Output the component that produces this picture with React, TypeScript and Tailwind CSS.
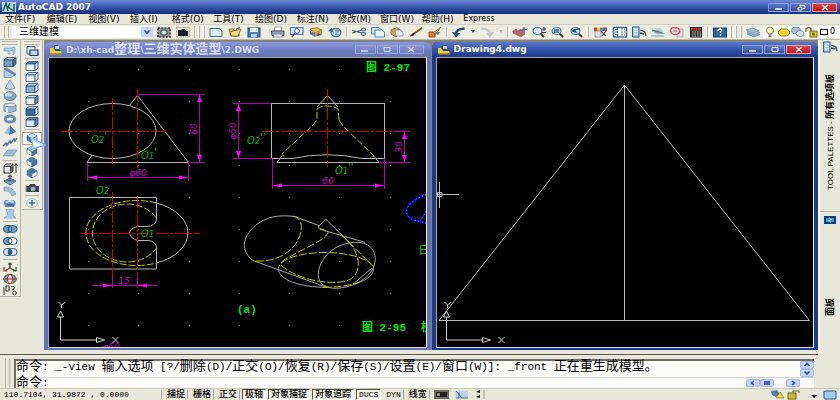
import React from "react";

const UI = "font-['DejaVu_Sans','Noto_Sans_CJK_SC',sans-serif]";
const MONO = "font-['Liberation_Mono','Noto_Sans_CJK_SC',monospace]";

/* Latin text with the Chinese runs set in a full-width 13px size. */
function Mixed({ text }: { text: string }) {
  const parts = text.split(/([\u3000-\u9fff]+)/);
  return (
    <>
      {parts.map((p, i) =>
        i % 2 ? (
          <span key={i} className="text-[13px]">{p}</span>
        ) : (
          <span key={i}>{p}</span>
        ),
      )}
    </>
  );
}

const B = "#5b86b4";
const D = "#1f4878";
const L = "#cfe2f2";

const cube = (top: string, front: string, side: string) => (
  <g stroke={D} strokeWidth=".8">
    <path d="M2 4L5 1.5H14L11 4Z" fill={top} />
    <path d="M2 4H11V10.5H2Z" fill={front} />
    <path d="M11 4L14 1.5V8L11 10.5Z" fill={side} />
  </g>
);
const iso = (a: string, b: string, c: string) => (
  <g stroke="#42678e" strokeWidth=".6">
    <path d="M3 4L8 1L13 4L8 7Z" fill={a} />
    <path d="M3 4L8 7V11L3 8Z" fill={b} />
    <path d="M13 4L8 7V11L13 8Z" fill={c} />
  </g>
);
const lens = (extra: React.ReactNode) => (
  <g>
    <path d="M9 7L13 11" stroke="#4a3a28" strokeWidth="2" />
    <ellipse cx="6.5" cy="5" rx="4.5" ry="3.5" fill="#d4e8f4" stroke="#56718c" strokeWidth="1.2" />
    {extra}
  </g>
);
const rings = (a: string, m: string, b: string) => (
  <g stroke="#24567c" strokeWidth=".9">
    <rect x="1.5" y="2.5" width="9" height="7" rx="3.5" fill={a} />
    <rect x="6" y="2.5" width="9" height="7" rx="3.5" fill={b} />
    <ellipse cx="8.2" cy="6" rx="1.8" ry="2.6" fill={m} />
  </g>
);

const ICONS: Record<string, React.ReactNode> = {
  gear: (
    <g>
      <rect x="2" y="2" width="12" height="9" fill="#9a9c98" stroke="#333" strokeWidth="1.6" strokeDasharray="2 1.3" />
      <ellipse cx="8" cy="6.5" rx="3.4" ry="2.6" fill="#e8e0b8" stroke="#38608a" strokeWidth="1.4" />
    </g>
  ),
  wsave: (
    <g>
      <rect x="1.5" y="1.5" width="13" height="9.5" fill="none" stroke="#8f8a55" strokeDasharray="1 1" />
      <path d="M3 10V4H6L7 3H10L11 5H13V10Z" fill="#1b1d22" />
    </g>
  ),
  new: <path d="M2 2.5H11L14 5V10.5H2Z" fill="#dff0f8" stroke="#3d6c94" strokeWidth="1" />,
  open: (
    <g>
      <path d="M2 3H6L7 4.5H12V10H4Z" fill="#e2bb4a" stroke="#6c5b22" strokeWidth=".8" />
      <path d="M3 6L14 3L11 10H4Z" fill="#f4dc7d" stroke="#6c5b22" strokeWidth=".8" />
      <path d="M9 3L13 1.5" stroke="#333" />
    </g>
  ),
  save: (
    <g>
      <rect x="2" y="2" width="12" height="9" fill="#477eb8" stroke="#224a7c" />
      <rect x="4" y="2" width="8" height="4" fill="#e6f0f8" />
      <rect x="5" y="8" width="6" height="3" fill="#bed0e2" />
    </g>
  ),
  plot: (
    <g>
      <path d="M5 1H12L11 5H4Z" fill="#fff" stroke="#779" strokeWidth=".7" />
      <path d="M1.500 5H14V9.500H2Z" fill="#9aa0b4" stroke="#4d526c" />
      <path d="M4 8H12V11H3Z" fill="#dfe6ee" stroke="#667" strokeWidth=".6" />
    </g>
  ),
  preview: (
    <g>
      <path d="M1.500 1.500H14V8.500H1.500Z" fill="#cfe4f2" stroke="#4d7fa8" strokeWidth="1.2" />
      <circle cx="8" cy="5" r="2.4" fill="#eaf6ff" stroke="#456" />
      <path d="M6 7L3 11" stroke="#345" strokeWidth="1.6" />
    </g>
  ),
  publish: (
    <g>
      <path d="M2 3L9 1.500L14 4L7 7Z" fill="#eabf3e" stroke="#6b5518" strokeWidth=".7" />
      <path d="M2 5L7 7V11L2 8Z" fill="#5c7a9c" />
      <path d="M7 7L14 4V8L7 11Z" fill="#d1953a" />
      <path d="M10 7L14 9L9 10Z" fill="#2b568a" />
    </g>
  ),
  globe: (
    <g>
      <ellipse cx="9" cy="6.500" rx="5" ry="4.300" fill="#7db7d6" stroke="#38709c" />
      <path d="M7 4Q9 6 7 9M10 3L13 6L10 8" stroke="#d8eef6" fill="none" />
      <path d="M1 5L5 2L6 6Z" fill="#2e5f8c" />
      <circle cx="11" cy="4" r="1.500" fill="#da7a5a" />
    </g>
  ),
  cut: (
    <g stroke="#435a74" strokeWidth="1.200" fill="none">
      <path d="M1 4.500L11 7M1 7L11 4" />
      <ellipse cx="12.500" cy="3.500" rx="2" ry="1.500" />
      <ellipse cx="12.500" cy="8" rx="2" ry="1.500" />
    </g>
  ),
  copy: (
    <g stroke="#4d80ac" strokeWidth=".9">
      <path d="M1.500 1.500H9L11 3.500V8H1.500Z" fill="#c3dff0" />
      <path d="M5 4H12L14.500 6V11H5Z" fill="#e6f4fb" />
    </g>
  ),
  paste: (
    <g>
      <path d="M2 4L8 1.500L13 6L7 11L2 8Z" fill="#c9a650" stroke="#6e5d30" strokeWidth=".8" />
      <path d="M6 4H12L14 7V10H7Z" fill="#dceaf4" stroke="#628" strokeWidth=".4" />
    </g>
  ),
  brush: (
    <g>
      <path d="M14 2L7 7" stroke="#8c5527" strokeWidth="1.800" />
      <path d="M8 6L5 10L1.500 10.500L5 7Z" fill="#202020" />
    </g>
  ),
  match: (
    <g>
      <path d="M2 6H8V11H2Z" fill="#e98127" stroke="#8a2f12" strokeWidth=".8" />
      <path d="M14 1L6 7L9 8Z" fill="#f7c74a" stroke="#7c4d16" strokeWidth=".7" />
      <path d="M8 6L11 9L13 6" fill="#477cb2" />
    </g>
  ),
  undo: (
    <g>
      <path d="M5 8Q5 3 13.500 2.500" stroke="#1d4b80" strokeWidth="2.400" fill="none" />
      <path d="M1 6L9 7L5 11.500Z" fill="#1d4b80" />
    </g>
  ),
  redo: (
    <g>
      <path d="M11 8Q11 3 2.500 2.500" stroke="#c0c4c4" strokeWidth="2.200" fill="none" />
      <path d="M15 6L7 7L11 11.500Z" fill="#c0c4c4" />
    </g>
  ),
  pan: (
    <g>
      <path d="M1 5L4 3L6 5L9 3L12 6L13 8L9 11L5 9L1 7Z" fill="#b4646a" stroke="#9c5058" strokeWidth=".6" />
      <path d="M12 1V6M9.500 3.500H15" stroke="#3b5c80" strokeWidth="1.200" />
    </g>
  ),
  zoomrt: lens(<path d="M13 1V5M11 3H15M11 6.500H15" stroke="#333" />),
  zoomwin: lens(<rect x="4" y="3" width="5" height="4" fill="#4b87b8" />),
  zoomprev: lens(<path d="M4 5Q6 2 11 3M3 5L7 6L5 3" stroke="#1c4d84" fill="#1c4d84" strokeWidth="1.200" />),
  props: (
    <g>
      <path d="M1 1.500H4V5H1Z" fill="#e03838" />
      <path d="M4 1.500H7V5H4Z" fill="#f1ca34" />
      <path d="M7 1.500H10V5H7Z" fill="#36a25a" />
      <path d="M10 1.500H14V5H10Z" fill="#8c49b6" />
      <path d="M2 5H8V11H2Z" fill="#e6dcf0" stroke="#847a92" strokeWidth=".7" />
      <path d="M8 5L13 10M13 5L9 10" stroke="#574a5c" strokeWidth="1.200" />
    </g>
  ),
  dcenter: (
    <g>
      <rect x="1.500" y="1.500" width="13" height="9.500" fill="#fff" stroke="#33659c" strokeWidth="1.300" />
      <path d="M5.500 2V11M9 3H13M9 6H13M9 9H13" stroke="#4077b0" strokeDasharray="2 1" />
      <path d="M3 3.500H5M3 6H5M3 8.500H5" stroke="#4077b0" />
    </g>
  ),
  palette: (
    <g>
      <path d="M1.500 1H8V11H1.500Z" fill="#a9c8e4" stroke="#315e90" />
      <path d="M3 3H7M3 5.500H7M3 8H7" stroke="#fff" />
      <path d="M9 4L14 6L15 10M9 7L13 8" stroke="#33455c" strokeWidth="1.300" fill="none" />
    </g>
  ),
  sheets: (
    <g>
      <path d="M1 2H10L14 6H5Z" fill="#bcd6e4" />
      <path d="M1 5L8 4L15 8H7Z" fill="#86a9b8" />
      <path d="M1 9H14V11H1Z" fill="#a8c6d6" />
      <path d="M2 4L12 7" stroke="#5c7e54" />
    </g>
  ),
  markup: (
    <g>
      <rect x="8" y="3" width="6" height="8" fill="#ddd" stroke="#999" strokeWidth=".7" />
      <path d="M2 3Q3 1 6 2Q10 1 10 4Q12 6 9 8Q6 9 4 8Q1 7 2 3Z" fill="#fbe3e6" stroke="#df4152" strokeWidth="1.300" />
      <path d="M4 5H8" stroke="#df4152" />
    </g>
  ),
  calc: (
    <g>
      <rect x="2" y="1" width="12" height="10.500" fill="#2b2422" />
      <rect x="3" y="2" width="10" height="2.500" fill="#a33c30" />
      <path d="M4 6H13M4 8H13M4 10H13" stroke="#d6d6cc" strokeDasharray="1.500 1" />
    </g>
  ),
  help: (
    <g>
      <rect x="1.500" y="2" width="13" height="9" fill="#2c649c" stroke="#16406e" />
      <path d="M6 5Q6 3 8.500 3Q11 4 8.500 6V7M8.500 8.500V9.700" stroke="#fff" strokeWidth="1.300" fill="none" />
    </g>
  ),
  layers: (
    <g stroke="#6b8cac" strokeWidth=".7">
      <path d="M2 8L8 6L15 8.500L9 11Z" fill="#8ea6bc" />
      <path d="M2 6L8 4L15 6.500L9 9Z" fill="#b2c6d8" />
      <path d="M1 4L7 2L14 4.500L8 7Z" fill="#a7bfd2" />
    </g>
  ),
  bulb: (
    <g>
      <ellipse cx="8" cy="4.500" rx="3.600" ry="3.500" fill="#fbf6bd" stroke="#a08c2c" />
      <path d="M6.500 8H9.500V11H6.500Z" fill="#8e8c70" />
    </g>
  ),
  sun: <path d="M5 3H11L13.500 5V8L11 10H5L2.500 8V5Z" fill="#ecd42c" stroke="#9c8716" />,
  frozen: (
    <g stroke="#55779a" strokeWidth=".7">
      <ellipse cx="6" cy="4.500" rx="4.500" ry="3.500" fill="#a4bfd2" />
      <ellipse cx="10" cy="7.500" rx="4" ry="3" fill="#d1e0ea" />
    </g>
  ),
  lock: (
    <g>
      <path d="M2 6V3Q5 0 7 3V6" fill="none" stroke="#7c751c" strokeWidth="1.500" />
      <rect x="6" y="5" width="7" height="6" fill="#dccb2c" stroke="#6c6416" />
      <circle cx="9.500" cy="8" r="1.500" fill="#6c6416" />
    </g>
  ),
  polysolid: <path d="M2 3H9L13 2V8L11 10V5L8 6V9H6V6L2 6Z" fill="#a7cbea" stroke="#76a0c8" strokeWidth=".6" />,
  box: cube("#cfe0f0", "#7e9cc0", "#456a98"),
  wedge: (
    <g stroke="#5f7fa0" strokeWidth=".7">
      <path d="M2 2L13 8L9 10.500H2Z" fill="#b4cbe0" />
      <path d="M2 2L5 1L14 7L13 8Z" fill="#5f88b4" />
    </g>
  ),
  cone: <path d="M8 1L13 9Q8 12 3 9Z" fill="#c5d6e6" stroke="#6e8cac" strokeWidth=".8" />,
  sphere: (
    <g>
      <ellipse cx="8" cy="6" rx="6" ry="4.500" fill="#86a3c4" stroke="#57789c" strokeWidth=".8" />
      <ellipse cx="6.500" cy="4.500" rx="3.500" ry="2" fill="#c9dced" />
    </g>
  ),
  cylinder: (
    <g stroke="#6785a8" strokeWidth=".8">
      <path d="M2 3V9Q8 12 14 9V3Z" fill="#9cb8d4" />
      <ellipse cx="8" cy="3" rx="6" ry="1.700" fill="#dce8f2" />
      <path d="M5 5V10" stroke="#dfeaf4" strokeWidth="2" />
    </g>
  ),
  torus: <ellipse cx="8" cy="6" rx="4.700" ry="3" fill="#e4ebee" stroke="#6b8fb6" strokeWidth="3" />,
  pyramid: (
    <g>
      <path d="M8 1L2 9L7 11Z" fill="#9dc4e6" />
      <path d="M8 1L7 11L14 8Z" fill="#4878a8" />
    </g>
  ),
  helix: <path d="M1 10L4 7L5 9L8 5L9 7L12 3L13 5L15 2" stroke="#4b7098" strokeWidth="1.500" fill="none" />,
  planar: <path d="M1 9L6 3H15L11 9Z" fill="#9fbbd6" stroke="#7698b8" strokeWidth=".7" />,
  extrude: (
    <g stroke="#222" strokeWidth=".9">
      <path d="M2 4H9V11H2Z" fill="#e8e8e0" />
      <path d="M2 4L4 2H11L9 4Z" fill="#fff" />
      <path d="M9 4L11 2V9L9 11Z" fill="#888" />
      <path d="M14 11V2M12.500 4L14 1.500L15.500 4" fill="none" />
    </g>
  ),
  presspull: (
    <g>
      <path d="M2 7L8 4L14 7L8 11Z" fill="#87abc9" stroke="#2c4b6a" strokeWidth=".8" />
      <path d="M8 7V1M6 3L8 1L10 3M4 7H12" stroke="#2c4b6a" strokeWidth="1.100" fill="none" />
    </g>
  ),
  sweep: <path d="M2 2Q10 1 14 9L10 11Q8 5 2 6Z" fill="#9ec0e0" stroke="#6f93b8" strokeWidth=".7" />,
  revolve: (
    <g>
      <path d="M3 3H12L14 6L12 10H3L2 6Z" fill="#5b92c8" />
      <path d="M3 5Q8 1 13 5L10 6Q8 4 5 6Z" fill="#c1daf0" />
      <path d="M5 8H12" stroke="#1c466e" />
    </g>
  ),
  loft: <path d="M4 1.500H12L11 7L14 10H2L6 7Z" fill="#a9c8e8" stroke="#7ba3cc" strokeWidth=".7" />,
  union: rings("#6c9bbf", "#6c9bbf", "#6c9bbf"),
  subtract: rings("#6c9bbf", "#eef2f0", "#eef2f0"),
  intersect: rings("#d6e2ea", "#24567c", "#d6e2ea"),
  move3d: (
    <g fill="none" strokeWidth="1.200">
      <path d="M8 7V1.500M6 3H10" stroke="#222" />
      <path d="M8 7L2 10M2 6V10H5" stroke="#a33" />
      <path d="M8 7L14 10M14 6V10H11" stroke="#2b6a3a" />
    </g>
  ),
  rotate3d: (
    <g fill="none" strokeWidth="1.200">
      <ellipse cx="8" cy="6" rx="6" ry="4.500" stroke="#3c8a4a" />
      <ellipse cx="8" cy="6" rx="2.500" ry="4.500" stroke="#b8323a" />
      <path d="M1 6H15" stroke="#b8323a" />
      <path d="M4 3V9M12 3V9" stroke="#2c5a9c" />
    </g>
  ),
  align3d: (
    <g fill="none" stroke="#333">
      <path d="M2 3V11M4 2H7V7H4Z" />
      <path d="M9 3Q13 1 12 5L10 6" />
      <circle cx="12.500" cy="9" r="1.800" />
    </g>
  ),
  views: (
    <g>
      <path d="M3 1.500H11V9H3Z" fill="#e4edf2" stroke="#44658a" />
      <path d="M6 5H14V10.500H6Z" fill="#bcd4e6" stroke="#1e3c5c" strokeWidth="1.200" />
    </g>
  ),
  vtop: cube(B, "#f1f5f7", L),
  vbottom: cube(L, "#e4eef4", "#f1f5f7"),
  vleft: cube(L, "#86acce", "#f1f5f7"),
  vright: cube(L, "#f1f5f7", B),
  vfront: cube(L, "#3c6a9a", L),
  vback: cube(B, "#dbe8f0", B),
  sw: iso("#d9e8f2", "#3d73a8", L),
  se: iso(L, "#e6f0f6", "#3d73a8"),
  ne: iso("#4c80b0", "#e6f0f6", "#3d73a8"),
  nw: iso("#3d73a8", "#4c80b0", "#e6f0f6"),
  camera: (
    <g>
      <path d="M2 4H5L6 2H11L12 4H15V10H2Z" fill="#39444e" />
      <ellipse cx="9" cy="7" rx="2.500" ry="2.200" fill="#9fb2c0" />
      <path d="M2 3V10" stroke="#8a98a2" />
    </g>
  ),
  eye: (
    <g>
      <ellipse cx="8" cy="6" rx="5.500" ry="4.300" fill="#eef3f4" stroke="#9cb4c8" />
      <path d="M8 3V9M5 6H11" stroke="#34689a" strokeWidth="1.400" />
    </g>
  ),
};

function Icon({ name }: { name: string }) {
  return (
    <svg viewBox="0 0 16 12" className="h-3 w-4 shrink-0" aria-hidden="true">
      {ICONS[name]}
    </svg>
  );
}

function ToolButton({ name }: { name: string }) {
  return (
    <button aria-label={name} className="flex w-[19px] shrink-0 items-center justify-center">
      <Icon name={name} />
    </button>
  );
}

function Sep() {
  return (
    <div className="flex w-[5px] shrink-0 justify-center py-[2px]">
      <div className="w-px bg-[#c4c4b4]" />
    </div>
  );
}

function Grip() {
  return (
    <div className="flex w-[14px] shrink-0 justify-center gap-[3px] py-[1px]">
      <div className="w-px bg-[#b8b8a8]" />
      <div className="w-[2px] border-r border-[#b8b8a8] bg-white" />
      <div className="w-[2px] border-r border-[#b8b8a8] bg-white" />
    </div>
  );
}

function DropMark({ dim }: { dim?: boolean }) {
  return (
    <button aria-label="history" className="flex w-[9px] shrink-0 items-center justify-center">
      <svg viewBox="0 0 6 4" className="h-1 w-1.5">
        <path d="M1 0H5L3 3Z" fill={dim ? "#b4b8b8" : "#1d4b80"} />
      </svg>
    </button>
  );
}

function Tools({ names }: { names: string[] }) {
  return (
    <>
      {names.map((n) => (
        <ToolButton key={n} name={n} />
      ))}
    </>
  );
}

function WindowButtons({ active, restore }: { active: boolean; restore?: boolean }) {
  const base = active
    ? "border-[#8ea2e0] bg-linear-to-b from-[#5c78c8] to-[#3450a0]"
    : "border-[#98a4dc] bg-linear-to-b from-[#8894d0] to-[#6e7cc0]";
  const close = active ? "border-[#e8a0a0] bg-linear-to-b from-[#e04040] to-[#b81818]" : base;
  const stroke = active ? "#ffffff" : "#d4daf4";
  return (
    <div className="flex h-[9px] gap-px">
      <button aria-label="minimize" className={`flex w-[21px] items-center justify-center border ${base}`}>
        <svg viewBox="0 0 10 7" className="h-[7px] w-2.5">
          <path d="M1 5H8" stroke={stroke} strokeWidth="1.500" />
        </svg>
      </button>
      <button aria-label="maximize" className={`flex w-[21px] items-center justify-center border ${base}`}>
        <svg viewBox="0 0 10 7" className="h-[7px] w-2.5" fill="none" stroke={stroke}>
          {restore ? <path d="M4 2.500V1.500H9V4.500H7M2 3.500H6V6H2Z" /> : <path d="M2 1.500H8V5.500H2Z" />}
        </svg>
      </button>
      <button aria-label="close" className={`flex w-[25px] items-center justify-center border ${close}`}>
        <svg viewBox="0 0 10 7" className="h-[7px] w-2.5">
          <path d="M2 1L8 6M8 1L2 6" stroke={stroke} strokeWidth="1.400" />
        </svg>
      </button>
    </div>
  );
}

function DocWindow({ title, active, children }: { title: string; active: boolean; children: React.ReactNode }) {
  return (
    <section
      className={`flex min-w-0 flex-1 flex-col rounded-t-md border-x-[4px] border-b-[2px] ${
        active ? "border-[#1c3a8c] bg-[#1c3a8c]" : "border-[#6472b0] bg-[#6472b0]"
      }`}
    >
      <header
        className={`-mx-[4px] flex h-[15px] shrink-0 items-center gap-[4px] rounded-t-md pr-[7px] pl-[6px] ${
          active ? "bg-linear-to-b from-[#5a78cc] via-[#3454a8] to-[#1c3a8c]" : "bg-linear-to-b from-[#8c98dc] via-[#7080c4] to-[#6472b0]"
        }`}
      >
        <svg viewBox="0 0 12 10" className="h-2.5 w-3 shrink-0">
          <path d="M4 0H8V3L11 6H5Z" fill="#2c5060" />
          <path d="M5 1H9V4H5Z" fill="#d4e4e0" />
          <path d="M0 3H3L5 6H11L12 9H0Z" fill="#f1cc38" />
          <path d="M0 8H12V9.500H0Z" fill="#b89020" />
        </svg>
        <h2
          className={`min-w-0 flex-1 text-[9px] leading-[15px] font-bold whitespace-pre ${
            active ? "text-white" : "text-[#d8def6]"
          }`}
        >
          <Mixed text={title} />
        </h2>
        <WindowButtons active={active} />
      </header>
      <div className="min-h-0 flex-1 border border-t-[#a8a8a0] border-r-[#f0f0f4] border-b-[#e0e0e4] border-l-[#a8a8a0] bg-black">
        {children}
      </div>
    </section>
  );
}

function Ucs({ x }: { x: number }) {
  return (
    <g stroke="#d4d4d4" fill="none">
      <path d={`M${x} 317V340H${x + 37}`} />
      <path d={`M${x - 3} 317L${x} 311L${x + 3} 317ZM${x + 36} 337.500L${x + 44} 340L${x + 36} 342.500Z`} />
      <path d={`M${x - 2} 302L${x + 1} 305L${x + 5} 302M${x + 1} 305V308M${x + 52} 337L${x + 58} 343M${x + 58} 337L${x + 52} 343`} />
    </g>
  );
}

/* Filled dimension arrowhead with its tip at x, y. */
function Tip({ x, y, dir }: { x: number; y: number; dir: "u" | "d" | "l" | "r" }) {
  const d = {
    u: `M${x} ${y}L${x - 2.5} ${y + 7}H${x + 2.5}Z`,
    d: `M${x} ${y}L${x - 2.5} ${y - 7}H${x + 2.5}Z`,
    l: `M${x} ${y}L${x + 9} ${y - 2}V${y + 2}Z`,
    r: `M${x} ${y}L${x - 9} ${y - 2}V${y + 2}Z`,
  }[dir];
  return <path d={d} fill="#ff00ff" stroke="none" />;
}

const DOT_X = [88, 138, 189, 239, 289, 339, 390];
const DOT_Y = [69, 101, 133, 165, 197, 229, 261, 293, 325];

function OrthographicDrawing() {
  return (
    <svg className="block h-full w-full" role="img" aria-label="2.DWG">
      <g transform="translate(-49 -58)" fill="none">
        {DOT_X.map((x) => DOT_Y.map((y) => <rect key={`${x}-${y}`} x={x} y={y} width="1" height="1" fill="#707070" />))}

        <g stroke="#b4b4b4">
          <ellipse cx="112.500" cy="131" rx="43.500" ry="27.500" />
          <path d="M129 106L137.500 95.500L188.500 162.500H87L92 155" />
          <path d="M271.500 158V103.500H384.500V158.500H372M271.500 158.500H292Q327 151 362 158.500H372" />
          <path d="M282 156L277 162.500H379L373 155M317 107L327.500 95.500L338 107" />
          <path d="M156.500 248V269H69.500V197.500H156.500V219Q156 226 146 226.500H138C127 228 127 238 138 240.500H148Q156 241 156.500 248" />
          <path d="M156.500 203A51 32.500 0 0 1 156.500 263" />
        </g>

        <g stroke="#c8c800" strokeDasharray="7 2">
          <path d="M156.500 203A51 32.500 0 1 0 156.500 263" />
          <path d="M156.500 218A34.500 29 0 1 0 156.500 248" />
          <path d="M339 120L338 109Q334 106 327 106Q320 106 317 109V120L313 125L282 154L285 158M339 120L343 126L374 156L370 158" />
        </g>

        <g stroke="#d00000" strokeDasharray="12 2 3 2">
          <path d="M112.500 98V164M137.500 89V168M61 131.500H165" />
          <path d="M327.500 89V167M262 131.500H397" />
          <path d="M112.500 192V276M137.500 196V276M80 233.500H200" />
        </g>

        <g stroke="#b400b4">
          <path d="M137 94.500H205M188 162.500H205M199.500 95V162M87.500 163V181M188.500 163V181M88 177.500H188" />
          <path d="M233 103.500H271M233 158.500H271M238.500 104V158M394 131.500H410M380 162.500H410M404.500 132V162" />
          <path d="M272.500 159V189M384.500 159V189M273 185.500H384M112.500 276V288M137.500 276V288M92 285.500H158" />
          <Tip x={199.500} y={95} dir="u" />
          <Tip x={199.500} y={162} dir="d" />
          <Tip x={88} y={177.500} dir="l" />
          <Tip x={188} y={177.500} dir="r" />
          <Tip x={238.500} y={104} dir="u" />
          <Tip x={238.500} y={158} dir="d" />
          <Tip x={404.500} y={132} dir="u" />
          <Tip x={404.500} y={162} dir="d" />
          <Tip x={273} y={185.500} dir="l" />
          <Tip x={384} y={185.500} dir="r" />
          <Tip x={112} y={285.500} dir="r" />
          <Tip x={138} y={285.500} dir="l" />
        </g>

        <g className="fill-[#d000d0] font-['DejaVu_Sans',sans-serif] text-[9px] italic" textAnchor="middle">
          <text x="138" y="176">φ60</text>
          <text x="328" y="184">66</text>
          <text x="124" y="284">15</text>
          <text x="111" y="350">φ60</text>
          <text transform="translate(197 129) rotate(-90)">60</text>
          <text transform="translate(236 131) rotate(-90)">φ50</text>
          <text transform="translate(402 147) rotate(-90)">30</text>
        </g>

        <g className="fill-[#00b400] font-['DejaVu_Sans',sans-serif] text-[10px] italic">
          <text x="91" y="143">O<tspan className="text-[8px]">2</tspan><tspan dy="-3">'</tspan></text>
          <text x="141" y="159">O<tspan className="text-[8px]">1</tspan><tspan dy="-3">'</tspan></text>
          <text x="247" y="144">O<tspan className="text-[8px]">2</tspan><tspan dy="-3">''</tspan></text>
          <text x="335" y="174">O<tspan className="text-[8px]">1</tspan><tspan dy="-3">''</tspan></text>
          <text x="96" y="194">O<tspan className="text-[8px]">2</tspan></text>
          <text x="141" y="237">O<tspan className="text-[8px]">1</tspan></text>
        </g>

        <g transform="translate(60 180) scale(0.3333)" strokeWidth="3">
          <g stroke="#a8a8a8">
            <path d="M580 242C553 225 545 190 562 165C590 120 640 100 705 110L780 138M775 140L797 117L870 190M780 148L915 187" />
            <path d="M580 242L800 322M655 265C655 300 720 322 800 322" />
            <path d="M775 285C775 240 820 185 895 187C940 190 952 225 943 255C930 300 870 326 820 325C790 320 775 310 775 285Z" />
            <path d="M940 260C945 285 915 305 880 312L935 265" />
          </g>
          <g stroke="#c8c800" strokeDasharray="24 6">
            <path d="M700 108C730 115 728 150 715 178C695 220 640 250 580 242" />
            <path d="M775 143L805 155C800 180 740 200 690 230C665 240 658 255 655 265" />
            <path d="M663 250C690 225 760 213 830 219C890 225 925 240 940 258M663 255C700 290 780 315 850 305C890 297 900 265 893 235C880 190 855 175 840 160L940 260" />
            <path d="M790 322Q850 322 895 308" />
          </g>
          <g>
            <path d="M1110 40C1040 62 1020 100 1060 120L1110 132M1110 75L1080 125" stroke="#0000e0" strokeWidth="6" />
            <path d="M1110 40C1040 62 1020 100 1060 120L1110 132M1110 75L1080 125" stroke="#9090ff" strokeWidth="3" strokeDasharray="3 8" />
          </g>
        </g>

        <g className="fill-[#00e800] font-['Liberation_Mono','Noto_Sans_CJK_SC',monospace] text-[11px] font-bold">
          <text x="366" y="71">图 2-97</text>
          <text x="362" y="331">图 2-95</text>
          <text x="421" y="331">柱</text>
          <text x="237" y="313">(a)</text>
          <text x="419" y="254" className="font-normal">曰</text>
        </g>
        <Ucs x={60.5} />
      </g>
    </svg>
  );
}

function FrontViewDrawing() {
  return (
    <svg className="block h-full w-full" role="img" aria-label="Drawing4.dwg">
      <g transform="translate(-437 -58)" fill="none" stroke="#b8bcbc">
        <path d="M624.500 85L439 320.500H809.500ZM624.500 85V320" />
        <path d="M439.500 182V208M437 194.500H459M437.500 192.500H442V196.500H437.500Z" />
        <Ucs x={446.5} />
      </g>
    </svg>
  );
}

const MENUS = ["文件(F)", "编辑(E)", "视图(V)", "插入(I)", "格式(O)", "工具(T)", "绘图(D)", "标注(N)", "修改(M)", "窗口(W)", "帮助(H)", "Express"];

const MODELING = [
  ["polysolid", "box", "wedge", "cone", "sphere", "cylinder", "torus", "pyramid", "helix", "planar"],
  ["extrude", "presspull", "sweep", "revolve", "loft"],
  ["union", "subtract", "intersect"],
  ["move3d", "rotate3d", "align3d"],
];
const VIEWS = [["views"], ["vtop", "vbottom", "vleft", "vright", "vfront", "vback"], ["sw", "se", "ne", "nw"], ["camera"], ["eye"]];

function SideBar({ groups, size, selected }: { groups: string[][]; size: string; selected?: string }) {
  return (
    <div className={`flex w-[21px] flex-col border-r border-b border-[#b4b4a4] bg-[#ecece0] ${size}`}>
      <div className="mx-[2px] h-[5px] shrink-0 border-b border-[#b8b8a8] pt-[1px]">
        <div className="h-px bg-[#b8b8a8]" />
      </div>
      {groups.map((group, g) => (
        <React.Fragment key={g}>
          {g > 0 && (
            <div className="flex h-[4px] shrink-0 items-center px-[3px]">
              <div className="h-px w-full bg-[#b8b8a8]" />
            </div>
          )}
          {group.map((n) => (
            <button
              key={n}
              aria-label={n}
              className={`flex min-h-0 flex-1 items-center justify-center ${n === selected ? "border border-[#a4a498] bg-[#f8f8f4]" : ""}`}
            >
              <Icon name={n} />
            </button>
          ))}
        </React.Fragment>
      ))}
    </div>
  );
}

const MODES: [string, boolean][] = [
  ["捕捉", false],
  ["栅格", false],
  ["正交", false],
  ["极轴", true],
  ["对象捕捉", true],
  ["对象追踪", true],
  ["DUCS", true],
  ["DYN", false],
  ["线宽", false],
];

function ScrollKey({ label, d }: { label: string; d: string }) {
  return (
    <button aria-label={label} className="flex h-[8px] w-[14px] shrink-0 items-center justify-center rounded-xs border border-[#a4b8ec] bg-[#c6d4fa]">
      <svg viewBox="0 0 8 6" className="h-1.5 w-2" fill="none" stroke="#2c4c94" strokeWidth="1.600">
        <path d={d} />
      </svg>
    </button>
  );
}

/* Palette caption, read from bottom to top. */
function PaletteTitle({ latin, name }: { latin?: string; name: string }) {
  return (
    <span className="rotate-180 font-['Liberation_Sans','Noto_Sans_CJK_SC',sans-serif] text-[9px] leading-[14px] whitespace-pre [text-orientation:sideways] [writing-mode:vertical-rl]">
      {latin && <span className="text-[8px]">{latin}</span>}
      <span className="font-bold">{name}</span>
    </span>
  );
}

export default function App() {
  return (
    <div className={`flex h-screen flex-col overflow-hidden bg-[#e8e8da] text-black ${UI}`}>
      <header className="flex h-[14px] shrink-0 items-center bg-linear-to-b from-[#6c88d8] via-[#3858ac] to-[#142e78] pr-[3px] pl-[2px]">
        <svg viewBox="0 0 14 10" className="mr-[2px] h-2.5 w-3.5">
          <rect width="14" height="10" fill="#b8d8d4" />
          <path d="M1 9L4 1L6 9M8 1L6 5L12 9V2" stroke="#17565a" strokeWidth="1.400" fill="none" />
        </svg>
        <h1 className="flex-1 text-[9px] leading-[14px] font-bold text-white">AutoCAD 2007</h1>
        <WindowButtons active restore />
      </header>

      <nav className="flex h-[11px] shrink-0 items-center border-b border-[#d0d0c0] pl-[5px]">
        <div className="grid w-[500px] grid-cols-12">
          {MENUS.map((m) => (
            <button key={m} className={`text-left leading-[10px] whitespace-nowrap ${m === "Express" ? "text-[8px]" : "text-[9px]"}`}>
              {m}
            </button>
          ))}
        </div>
      </nav>

      <div className="flex h-[15px] shrink-0 border-b border-[#b8b8a8] bg-[#ecece0]">
        <div className="flex w-[12px] shrink-0 justify-center gap-[3px] py-[1px]">
          <div className="w-px bg-[#b8b8a8]" />
          <div className="w-px bg-[#b8b8a8]" />
        </div>
        <div className="flex w-[142px] shrink-0 items-center">
          <div className="relative h-[12px] w-[141px] bg-white">
            <select aria-label="工作空间" className="block h-[12px] w-full appearance-none pr-4 pl-[7px] text-[10px] leading-[12px]">
              <option>三维建模</option>
            </select>
            <span className="pointer-events-none absolute top-px right-0 flex h-[10px] w-[12px] items-center justify-center bg-[#c6d6fa]">
              <svg viewBox="0 0 8 6" className="h-1.5 w-2" fill="none" stroke="#2c4c94" strokeWidth="1.600">
                <path d="M1.500 1.500L4 4L6.500 1.500" />
              </svg>
            </span>
          </div>
        </div>
        <Tools names={["gear", "wsave"]} />
        <Grip />
        <Tools names={["new", "open", "save"]} />
        <div className="w-[5px] shrink-0" />
        <Tools names={["plot", "preview", "publish", "globe"]} />
        <Sep />
        <Tools names={["cut", "copy", "paste", "brush", "match"]} />
        <Sep />
        <ToolButton name="undo" />
        <DropMark />
        <ToolButton name="redo" />
        <DropMark dim />
        <Sep />
        <Tools names={["pan", "zoomrt", "zoomwin", "zoomprev"]} />
        <Sep />
        <Tools names={["props", "dcenter", "palette", "sheets", "markup", "calc"]} />
        <Sep />
        <ToolButton name="help" />
        <Grip />
        <ToolButton name="layers" />
        <button className="mt-px ml-px flex h-[12px] min-w-0 flex-1 items-center bg-white text-[8px] leading-[12px]">
          {["bulb", "sun", "frozen", "lock"].map((n) => (
            <span key={n} className="flex w-[14px] shrink-0 justify-center">
              <Icon name={n} />
            </span>
          ))}
          <span className="mr-[2px] ml-px h-[6px] w-[8px] shrink-0 border border-black bg-white" />
          <span>0</span>
        </button>
      </div>

      <main className="flex min-h-0 flex-1">
        <aside className="relative flex w-[44px] shrink-0 items-start gap-px">
          <SideBar groups={MODELING} size="h-[257px]" />
          <SideBar groups={VIEWS} size="h-[170px]" selected="sw" />
          <svg viewBox="0 0 22 16" className="pointer-events-none absolute top-[97px] left-[25px] z-10 h-4 w-[22px]" aria-hidden="true">
            <path d="M5 0L21 8L4 13L8 8Z" fill="#b8dcf8" stroke="#6ca8e0" />
            <path d="M8 4L17 8L9 10Z" fill="#f0faff" />
          </svg>
        </aside>
        <div className="flex min-w-0 flex-1 gap-px bg-[#84847c] pt-[2px]">
          <DocWindow title="D:\xh-cad整理\三维实体造型\2.DWG" active={false}>
            <OrthographicDrawing />
          </DocWindow>
          <DocWindow title="Drawing4.dwg" active>
            <FrontViewDrawing />
          </DocWindow>
        </div>
        <aside className="flex w-[22px] shrink-0 flex-col items-center border-l-2 border-[#f8f8f0]">
          <div className="flex h-[172px] w-full flex-col items-center border-b border-[#b4b4a4] pt-[1px]">
            <Icon name="palette" />
            <div className="flex flex-1 items-center">
              <PaletteTitle latin="TOOL PALETTES - " name="所有选项板" />
            </div>
          </div>
          <svg viewBox="0 0 12 8" className="mt-[4px] h-2 w-3 shrink-0">
            <rect width="12" height="8" fill="#123c80" />
            <path d="M2 2H10V6H2Z" fill="#2e9ad8" />
            <path d="M5 1L8 4H6L7 7L4 4H6Z" fill="#f0d83c" />
          </svg>
          <div className="mt-[74px]">
            <PaletteTitle name="面板" />
          </div>
        </aside>
      </main>

      <section className="shrink-0 pt-[4px]">
        <div className="mr-[22px] h-[5px] border-t border-[#58584c]" />
        <div className="flex pr-[26px]">
          <div className="flex w-[14px] shrink-0 justify-center gap-[3px]">
            <div className="w-px bg-[#b8b8a8]" />
            <div className="w-px bg-[#b8b8a8]" />
          </div>
          <div className={`min-w-0 flex-1 border-t-2 border-l-2 border-[#6c6c60] bg-[#fbfbfa] text-[11px] ${MONO}`}>
            <div className="flex h-[17px] border-b border-[#d0d0c8]">
              <p className="min-w-0 flex-1 leading-[12px] whitespace-pre">
                <Mixed text="命令: _-view 输入选项 [?/删除(D)/正交(O)/恢复(R)/保存(S)/设置(E)/窗口(W)]: _front 正在重生成模型。" />
              </p>
              <div className="flex flex-col">
                <ScrollKey label="up" d="M1.500 4L4 1.500L6.500 4" />
                <ScrollKey label="down" d="M1.500 1.500L4 4L6.500 1.500" />
              </div>
            </div>
            <div className="flex h-[10px] items-center">
              <label htmlFor="command" className="leading-[10px]">
                <Mixed text="命令:" />
              </label>
              <input id="command" className="h-[10px] min-w-0 flex-1 bg-transparent px-1 outline-none" />
              <div className="mr-[14px] flex w-[54px]">
                <ScrollKey label="left" d="M5 1L2.500 3L5 5" />
                <ScrollKey label="thumb" d="M2 1V5M4 1V5M6 1V5" />
                <div className="flex-1" />
                <ScrollKey label="right" d="M3 1L5.500 3L3 5" />
              </div>
            </div>
          </div>
        </div>
      </section>

      <footer className="flex h-[12px] shrink-0 items-center border-t border-[#c8c8b8] text-[9px] leading-[9px]">
        <output className={`ml-[4px] w-[158px] border-r border-[#b4b4a4] text-[8px] whitespace-pre ${MONO}`}>110.7104, 31.9872 , 0.0000</output>
        <div className="flex gap-[2px] pl-[2px]">
          {MODES.map(([label, on]) => (
            <button
              key={label}
              className={`h-[11px] border px-[2px] font-medium whitespace-nowrap ${
                on ? "border-t-[#55554c] border-r-white border-b-white border-l-[#55554c] bg-[#f2f2ea]" : "border-t-transparent border-r-[#a4a498] border-b-transparent border-l-transparent"
              } ${/[A-Z]/.test(label) ? "font-['Liberation_Mono',monospace] text-[8px]" : ""}`}
            >
              {label}
            </button>
          ))}
        </div>
        <svg viewBox="0 0 54 11" className="ml-[4px] h-[11px] w-[54px]">
          <path d="M0 1H15V10H0Z" fill="#6c6c64" />
          <path d="M2 3H13V8H2Z" fill="#24241e" />
          <path d="M3 4H6V7H3Z" fill="#8c8c80" />
          <path d="M21 2H34V9H21Z" fill="#bcd0e4" />
          <path d="M22 2L28 9M22 9H34M25 3V9" stroke="#52749c" />
          <path d="M42 3L46 1V4ZM42 8L46 6V9Z" fill="#111" />
          <path d="M50 1V10" stroke="#a4a498" />
        </svg>
        <svg viewBox="0 0 70 11" className="mr-[2px] ml-auto h-[11px] w-[70px]">
          <path d="M3 2L9 1L12 5L8 8L4 6Z" fill="#4c80b4" />
          <path d="M8 9L12 3L16 9Z" fill="#f4dc24" stroke="#80701c" strokeWidth=".600" />
          <path d="M25 4V2H31V4" stroke="#6c6414" fill="none" />
          <path d="M20 4H28V10H20Z" fill="#dcbc24" stroke="#6c6414" />
          <path d="M43 6H49L46 9Z" fill="#111" />
          <rect x="56" y="2" width="12" height="8" rx="1" fill="#a4ccec" stroke="#2c5c8c" />
        </svg>
      </footer>
    </div>
  );
}
